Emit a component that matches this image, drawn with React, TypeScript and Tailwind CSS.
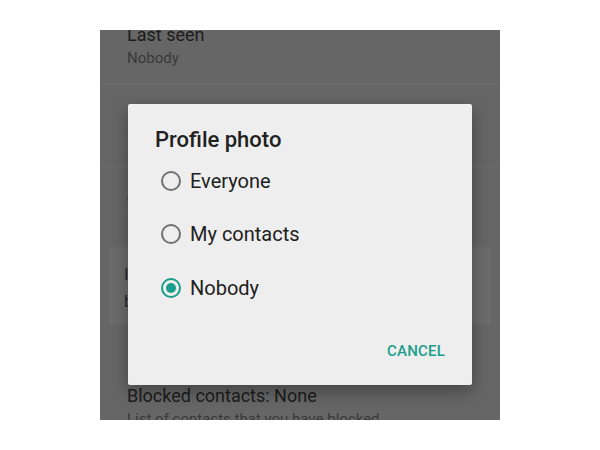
import { useState } from "react";

const options = ["Everyone", "My contacts", "Nobody"];

export default function App() {
  const [selected, setSelected] = useState("Nobody");

  return (
    <div className="w-[600px] h-[450px] bg-white font-['Roboto',sans-serif] pt-[30px] pl-[100px]">
      {/* dimmed privacy screen */}
      <div className="relative w-[400px] h-[390px] bg-[#666666] overflow-hidden">
        <div className="h-[54px] px-[27px] flex flex-col">
          <p className="mt-[-7px] text-[18px] leading-6 text-[#1c1c1c]">Last seen</p>
          <p className="mt-px text-[15px] leading-5 text-[#393939]">Nobody</p>
        </div>
        <div className="h-px bg-[#6e6e6e]" />
        <div className="h-[81px] px-[27px] pt-[26px]">
          <p className="text-[18px] leading-6 text-[#1c1c1c]">Profile photo</p>
          <p className="text-[15px] leading-5 text-[#393939]">Everyone</p>
        </div>
        <div className="h-px bg-[#6e6e6e]" />
        <div className="h-[80px] px-[27px] pt-[14px]">
          <p className="text-[18px] leading-6 text-[#1c1c1c]">About</p>
          <p className="text-[15px] leading-5 text-[#393939]">Everyone</p>
        </div>
        <div className="mx-[9px] h-[78px] bg-[#6c6c6c] px-[15px] pt-[14px]">
          <p className="text-[17px] leading-[27px] text-[#2a2a2a]">
            If you don't share your Last Seen, you won't
            <br />
            be able to see other people's Last Seen
          </p>
        </div>
        <div className="px-[27px] pt-[59px]">
          <p className="text-[18px] leading-6 text-[#1c1c1c]">Blocked contacts: None</p>
          <p className="mt-px text-[15px] leading-5 text-[#393939]">List of contacts that you have blocked</p>
        </div>

        {/* dialog */}
        <div className="absolute left-[28px] top-[74px] w-[344px] h-[281px] bg-[#eeeeee] rounded-[2px] shadow-[0_6px_18px_rgba(0,0,0,0.35)] flex flex-col">
          <h2 className="h-[50px] pl-[27px] pt-[22px] text-[22px] leading-[28px] font-medium text-[#212121]">
            Profile photo
          </h2>
          <div className="pl-[33px]">
            {options.map((o) => (
              <button
                key={o}
                onClick={() => setSelected(o)}
                className="flex items-center gap-[9px] h-[53.5px] w-full text-left"
              >
                {selected === o ? (
                  <span className="w-5 h-5 rounded-full border-2 border-[#1a9e8c] flex items-center justify-center">
                    <span className="w-[10px] h-[10px] rounded-full bg-[#1a9e8c]" />
                  </span>
                ) : (
                  <span className="w-5 h-5 rounded-full border-2 border-[#707070]" />
                )}
                <span className="text-[20px] leading-6 text-[#212121]">{o}</span>
              </button>
            ))}
          </div>
          <div className="mt-auto flex justify-end pr-[27px] pb-[24px]">
            <button className="text-[15px] leading-5 font-medium text-[#1a9e8c] tracking-[0.2px]">CANCEL</button>
          </div>
        </div>
      </div>
    </div>
  );
}
